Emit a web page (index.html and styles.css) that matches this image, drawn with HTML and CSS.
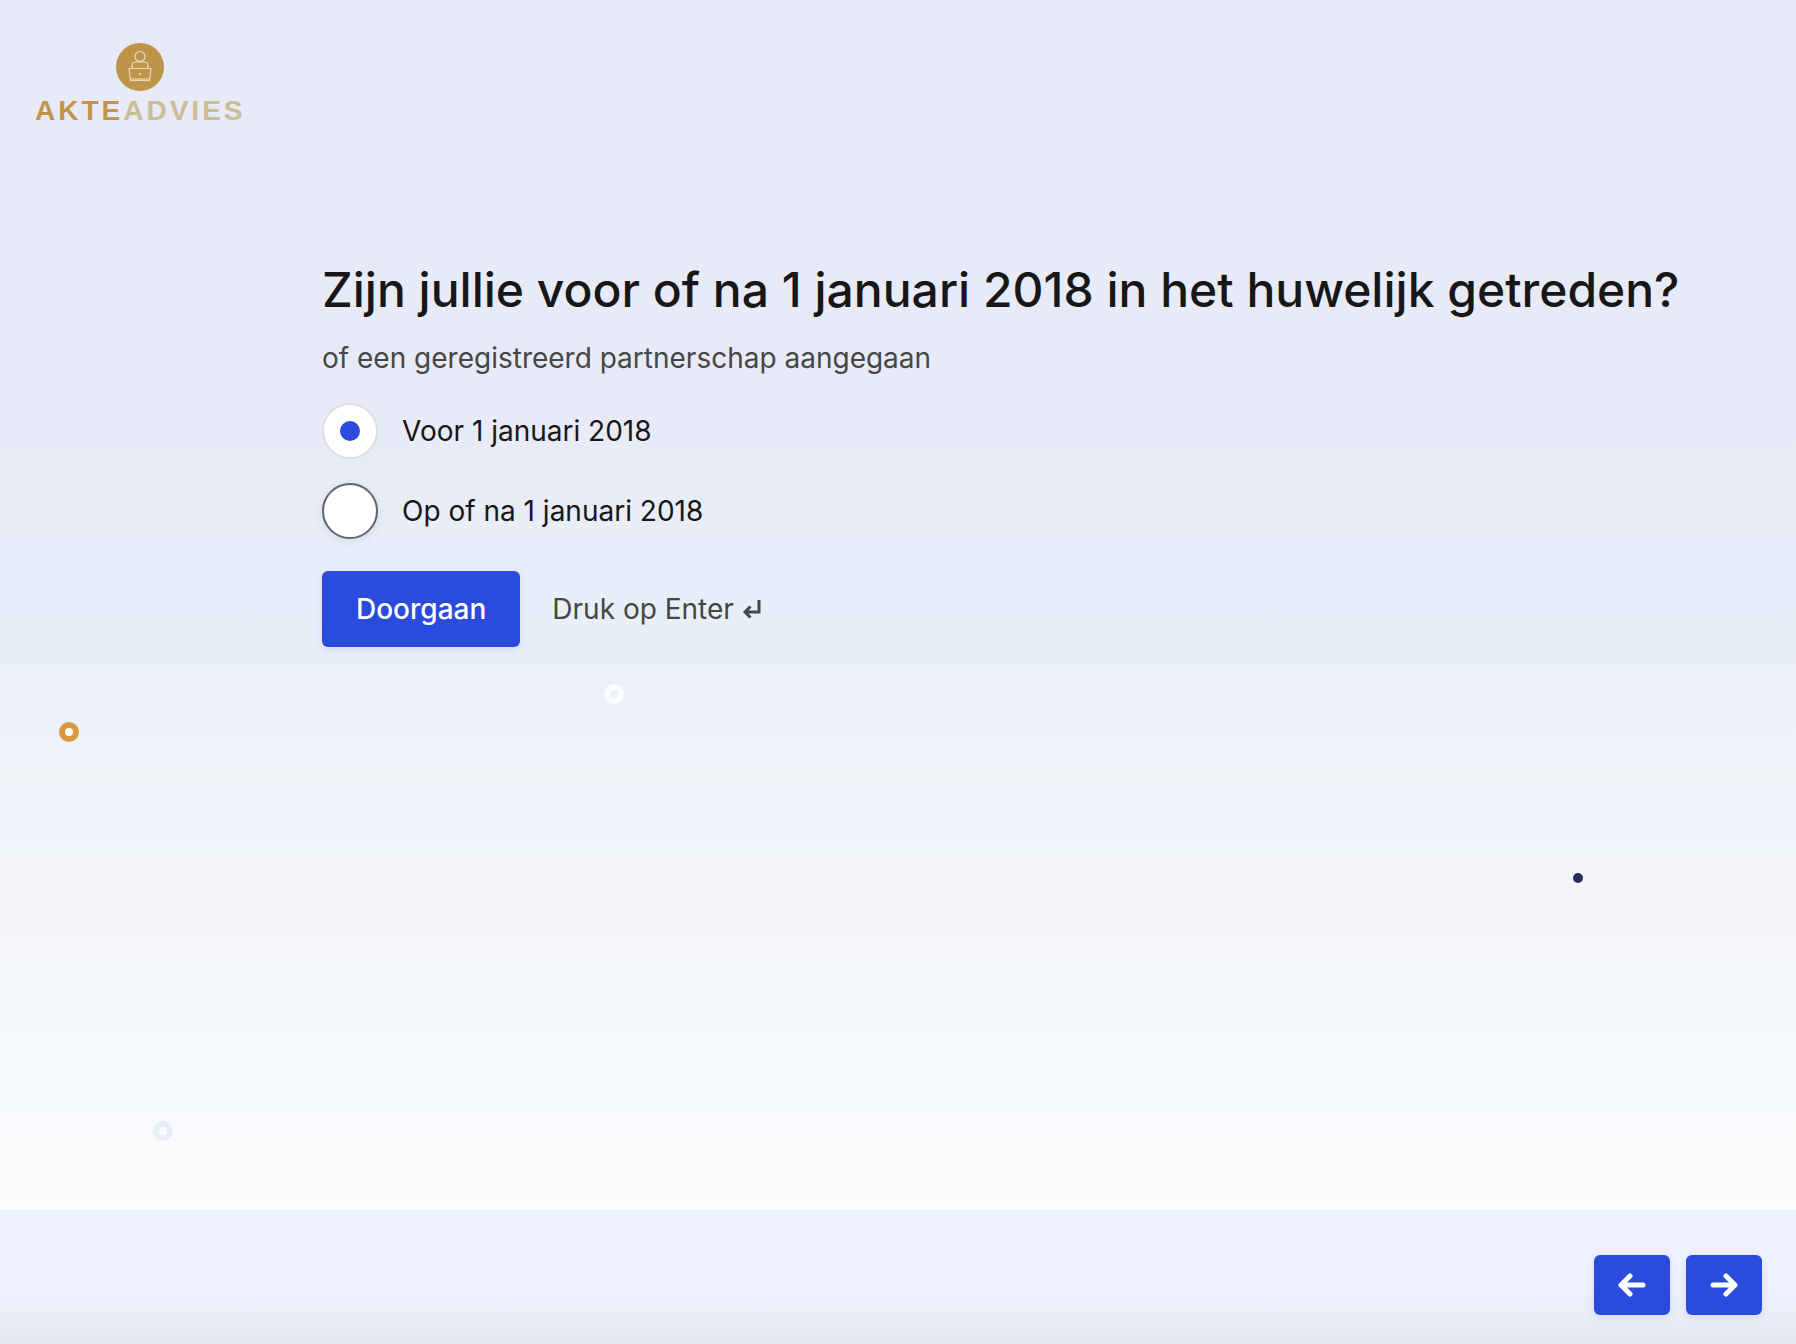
FILE: index.html
```html
<!DOCTYPE html>
<html lang="nl">
<head>
<meta charset="utf-8">
<meta name="viewport" content="width=device-width, initial-scale=1">
<title>AkteAdvies</title>
<link rel="stylesheet" href="styles.css">
</head>
<body>
<div class="page">
  <div class="decor" aria-hidden="true">
    <span class="dot dot-white"></span>
    <span class="dot dot-orange"></span>
    <span class="dot dot-pale"></span>
    <span class="dot dot-navy"></span>
  </div>
  <header class="header">
    <a class="logo" href="#">
      <svg class="logo-mark" viewBox="0 0 48 48" aria-hidden="true">
        <circle cx="24" cy="24" r="24" fill="#bd9448"/>
        <g fill="none" stroke="#e6d9bd" stroke-width="1.200" stroke-linejoin="round">
          <circle cx="24" cy="13.500" r="5"/>
          <path d="M16 25v-2q0-4 4-4h8q4 0 4 4v2"/>
          <path d="M13 25.500h22l-1.500 12h-19z"/>
          <path d="M15 36h18"/>
        </g>
        <circle cx="24" cy="31" r="1" fill="#f3ead8"/>
      </svg>
      <span class="logo-text"><span class="logo-akte">AKTE</span><span class="logo-advies">ADVIES</span></span>
    </a>
  </header>
  <main class="main">
    <form class="question">
      <h1 class="title" id="title">Zijn jullie voor of na 1 januari 2018 in het huwelijk getreden?</h1>
      <p class="subtitle">of een geregistreerd partnerschap aangegaan</p>
      <div class="options" role="radiogroup" aria-labelledby="title">
        <label class="option"><input class="radio" type="radio" name="datum" checked>Voor 1 januari 2018</label>
        <label class="option"><input class="radio" type="radio" name="datum">Op of na 1 januari 2018</label>
      </div>
      <div class="actions">
        <button class="button submit" type="submit">Doorgaan</button>
        <span class="hint">Druk op Enter
          <svg class="enter" viewBox="0 0 20 20" aria-hidden="true"><path d="M17 1v12H3M8.500 7.500L3 13l5.500 5.500" fill="none" stroke="currentColor" stroke-width="3"/></svg>
        </span>
      </div>
    </form>
  </main>
  <footer class="footer">
    <button class="button nav" type="button" aria-label="Vorige"><svg class="arrow" viewBox="0 0 28 24" aria-hidden="true"><path d="M25 12H3M12 3l-9 9 9 9"/></svg></button>
    <button class="button nav" type="button" aria-label="Volgende"><svg class="arrow" viewBox="0 0 28 24" aria-hidden="true"><path d="M3 12h22M16 3l9 9-9 9"/></svg></button>
  </footer>
</div>
</body>
</html>
```
FILE: styles.css
```css
* { box-sizing: border-box; }

body {
  margin: 0;
  font-family: Inter, "Liberation Sans", sans-serif;
  font-size: 28px;
  line-height: 36px;
  color: #171717;
}

.page {
  position: relative;
  display: flex;
  flex-direction: column;
  min-height: 100vh;
  background: linear-gradient(#e8ebf7 0%, #e8ebf7 30%, #e9edf8 38%, #e7effa 43%, #e9eff9 49%, #edf1fa 56%, #eff2f7 58%, #edf2fb 61%, #f2f4f8 64%, #f4f5fa 69%, #f4f8fb 75%, #f7fafd 81%, #fafbfd 86%, #fcfdfe 91%);
}

.header {
  display: flex;
  padding: 43px 35px 0;
}

.logo {
  display: flex;
  flex-direction: column;
  align-items: center;
  gap: 4px;
  text-decoration: none;
}

.logo-mark {
  width: 48px;
  height: 48px;
}

.logo-text {
  font-family: "Liberation Sans", Arial, sans-serif;
  font-size: 28px;
  font-weight: 700;
  line-height: 32px;
  letter-spacing: 3px;
}

.logo-akte { color: #c09548; }
.logo-advies { color: #cbbd94; }

.main {
  flex: 1;
  padding: 131px 80px 48px 322px;
}

.title {
  margin: 0;
  font-size: 48px;
  font-weight: 500;
  line-height: 64px;
}

.subtitle {
  margin: 18px 0 27px;
  color: #454746;
}

.options {
  display: flex;
  flex-direction: column;
  align-items: flex-start;
  gap: 24px;
}

.option {
  display: flex;
  align-items: center;
  gap: 24px;
}

.radio {
  appearance: none;
  display: grid;
  place-items: center;
  width: 56px;
  height: 56px;
  margin: 0;
  border: 2px solid #646669;
  border-radius: 50%;
  background: #fff;
  box-shadow: 0 2px 8px rgba(40, 50, 100, 0.1);
}

.radio:checked {
  border-color: #dedfe1;
  box-shadow: none;
}

.radio:checked::before {
  content: "";
  width: 20px;
  height: 20px;
  border-radius: 50%;
  background: #2b4bdd;
}

.actions {
  display: flex;
  align-items: center;
  gap: 32px;
  margin-top: 32px;
}

.button {
  border: 0;
  border-radius: 6px;
  background: #2b4bdd;
  color: #fff;
  font: inherit;
  box-shadow: 0 2px 8px rgba(40, 50, 100, 0.1);
}

.submit {
  padding: 20px 34px;
  font-weight: 500;
}

.hint {
  display: flex;
  align-items: center;
  gap: 8px;
  color: #454746;
}

.enter {
  width: 20px;
  height: 20px;
}

.footer {
  display: flex;
  justify-content: flex-end;
  gap: 16px;
  padding: 45px 34px 29px;
  background: linear-gradient(#eef1fe 0%, #eef1fe 55%, #ebedf9 80%, #e4e6f1 100%);
}

.nav {
  display: grid;
  place-items: center;
  width: 76px;
  height: 60px;
  padding: 0;
}

.arrow {
  width: 28px;
  height: 24px;
  fill: none;
  stroke: #fff;
  stroke-width: 5;
  stroke-linecap: round;
  stroke-linejoin: round;
}

.dot {
  position: absolute;
  width: 20px;
  height: 20px;
  border-radius: 50%;
}

.dot-white {
  left: 604px;
  top: 684px;
  border: 6px solid #fcfdff;
}

.dot-orange {
  left: 59px;
  top: 722px;
  border: 6px solid #da983f;
  background: #fff;
}

.dot-pale {
  left: 153px;
  top: 1121px;
  border: 6px solid #e9edf7;
}

.dot-navy {
  right: 213px;
  top: 873px;
  width: 10px;
  height: 10px;
  background: #2d2a62;
}
```
